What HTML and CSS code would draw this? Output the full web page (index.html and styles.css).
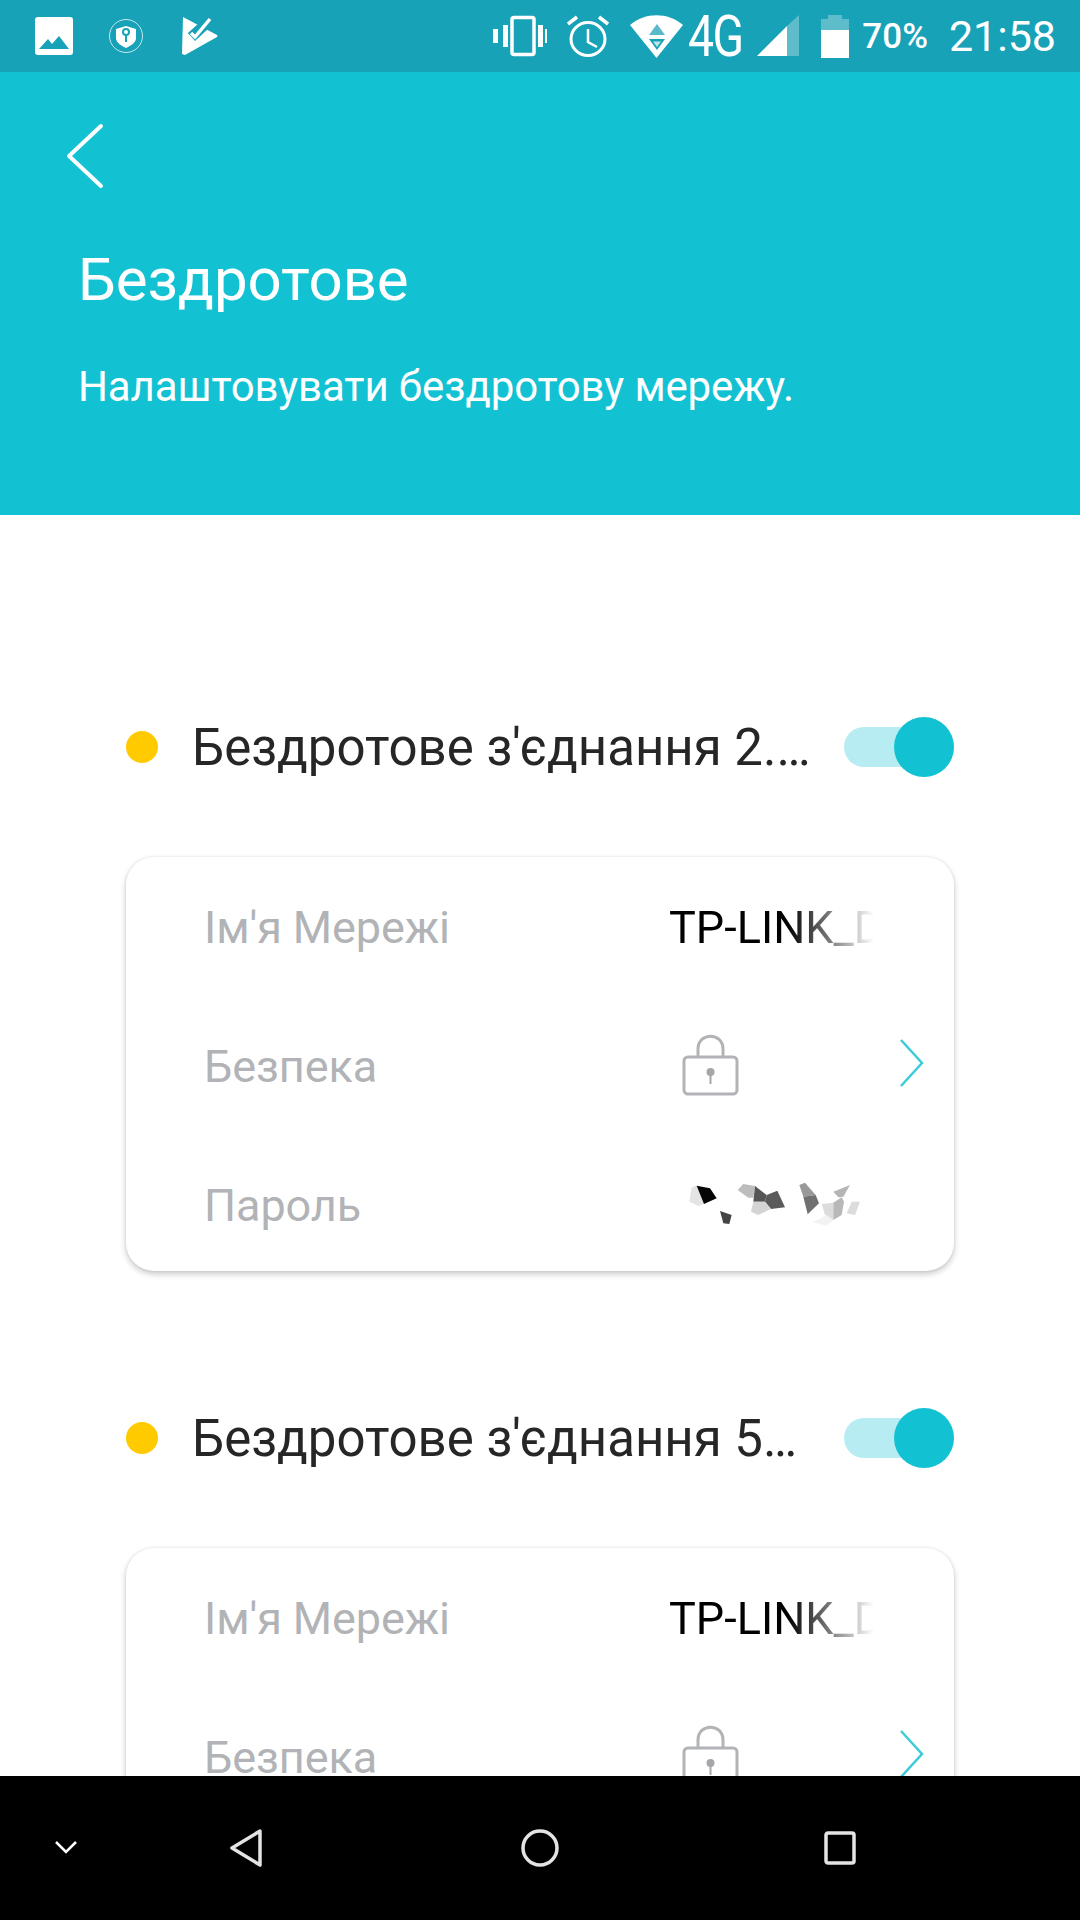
FILE: index.html
```html
<!DOCTYPE html>
<html lang="uk">
<head>
    <meta charset="UTF-8">
    <meta name="viewport" content="width=device-width, initial-scale=1.0">
    <title>Бездротове</title>
    <link rel="stylesheet" href="styles.css">
</head>
<body>
    <div class="screen">
        <div class="status-bar">
            <div class="status-left">
                <svg width="38" height="38" viewBox="0 0 38 38"><rect width="38" height="38" rx="3" fill="#fff"/><path d="M4 32 L13 22 L17 27 L24 19 L34 32 Z" fill="#17a2b8"/></svg>
                <svg class="shield" width="34" height="34" viewBox="0 0 34 34"><circle cx="17" cy="17" r="16.500" fill="none" stroke="#c5e6ec" stroke-width="1"/><path d="M17 7 L27 10 V19 C27 24 21 27 17 29 C13 27 7 24 7 19 V10 Z" fill="#fff"/><circle cx="17" cy="13" r="3" fill="none" stroke="#17a2b8" stroke-width="2"/><path d="M17 16 V23" stroke="#17a2b8" stroke-width="2"/></svg>
                <svg class="tasks" width="36" height="38" viewBox="0 0 36 38"><path d="M1 0 L35 18 Q36 19 35 20 L3 38 L0 37 Z" fill="#fff"/><path d="M6 16 L13 23 L30 4 L36 -2 L30 -6 L17 6 Z" fill="#17a2b8"/><path d="M6 16 L13 24 L26 12 L22 6 Z" fill="#17a2b8"/><path d="M9 16 L13 20 L28 2" fill="none" stroke="#fff" stroke-width="3.500"/></svg>
            </div>
            <div class="status-right">
                <svg width="54" height="42" viewBox="0 0 54 42"><rect x="0" y="14" width="5" height="14" fill="#fff"/><rect x="10" y="10" width="5" height="22" fill="#fff"/><rect x="19" y="2.500" width="22" height="37" rx="2" fill="none" stroke="#fff" stroke-width="3.500"/><rect x="45" y="10" width="5" height="22" fill="#fff"/><rect x="52" y="14" width="2" height="14" fill="#fff"/></svg>
                <svg class="alarm" width="42" height="42" viewBox="0 0 42 42"><ellipse cx="21" cy="24" rx="17" ry="16.500" fill="none" stroke="#fff" stroke-width="3"/><path d="M21 14 V27 L30 32" fill="none" stroke="#fff" stroke-width="2.500"/><path d="M1 9 L10 2 M41 9 L32 2" stroke="#fff" stroke-width="3.500"/></svg>
                <svg class="wifi" width="53" height="43" viewBox="0 0 53 43"><path d="M0 10 C15 -3 38 -3 53 10 L26.500 43 Z" fill="#fff"/><path d="M27 9 L35 20 H19 Z" fill="#5cb9c9"/><path d="M19 24 H35 L27 35 Z" fill="#17a2b8"/><path d="M23 26.500 H31 L27 32 Z" fill="#bfe3e9"/></svg>
                <span class="net">4G</span>
                <svg class="signal" width="42" height="42" viewBox="0 0 42 42"><path d="M0 41 L30 11 V41 Z" fill="#fff"/><path d="M30 11 L42 0 V41 H30 Z" fill="#5fbccb"/></svg>
                <div class="battery"><div class="battery-cap"></div><div class="battery-body"></div></div>
                <span class="percent">70%</span>
                <span class="clock">21:58</span>
            </div>
        </div>

        <div class="header">
            <svg class="back" width="38" height="68" viewBox="0 0 38 68"><path d="M35 3 L3 33 L35 63" fill="none" stroke="#fff" stroke-width="4" stroke-linecap="round" stroke-linejoin="round"/></svg>
            <h1>Бездротове</h1>
            <p>Налаштовувати бездротову мережу.</p>
        </div>

        <div class="content">
            <div class="band">
                <div class="band-head">
                    <span class="dot"></span>
                    <span class="band-name">Бездротове з'єднання 2.…</span>
                    <span class="toggle"><span class="knob"></span></span>
                </div>
                <div class="card">
                    <div class="row">
                        <span class="label">Ім'я Мережі</span>
                        <span class="value">TP-LINK_D</span>
                    </div>
                    <div class="row">
                        <span class="label">Безпека</span>
                        <svg class="lock" width="57" height="62" viewBox="0 0 57 62"><path d="M16 22 V15 C16 -2 41 -2 41 15 V22" fill="none" stroke="#b1b3b6" stroke-width="3"/><rect x="2" y="23" width="53" height="37" rx="4" fill="none" stroke="#b1b3b6" stroke-width="3"/><circle cx="28.500" cy="38" r="4" fill="#a4a6a9"/><path d="M28.500 40 V50" stroke="#a4a6a9" stroke-width="2"/></svg>
                        <svg class="chevron" width="24" height="50" viewBox="0 0 24 50"><path d="M1 2 L22 25 L1 48" fill="none" stroke="#3ccbd9" stroke-width="2.500"/></svg>
                    </div>
                    <div class="row">
                        <span class="label">Пароль</span>
                        <svg class="blurred" width="210" height="70" viewBox="0 0 630 210">
                            <path d="M65 82 L80 77 L102 132 L85 138 L58 125 Z" fill="#e4e4e4"/>
                            <path d="M80 77 L120 85 L140 115 L102 132 Z" fill="#050505"/>
                            <path d="M150 153 L185 165 L178 192 L160 190 Z" fill="#444"/>
                            <path d="M203 90 L220 72 L255 78 L250 113 L235 113 Z" fill="#bcbcbc"/>
                            <path d="M255 78 L290 105 L285 125 L250 125 Z" fill="#555"/>
                            <path d="M290 105 L322 92 L345 142 L303 147 L285 125 Z" fill="#5a5a5a"/>
                            <path d="M250 125 L285 125 L303 147 L265 165 L243 155 Z" fill="#d4d4d4"/>
                            <path d="M388 75 L405 68 L437 105 L400 110 Z" fill="#999"/>
                            <path d="M400 110 L437 105 L447 130 L413 163 Z" fill="#707070"/>
                            <path d="M490 95 L540 75 L520 110 L505 112 Z" fill="#b5b5b5"/>
                            <path d="M455 132 L490 128 L490 180 L465 165 Z" fill="#dcdcdc"/>
                            <path d="M490 128 L515 112 L522 125 L515 165 L490 180 Z" fill="#b8b8b8"/>
                            <path d="M545 125 L570 125 L555 165 L530 160 Z" fill="#dcdcdc"/>
                            <path d="M430 187 L470 165 L490 180 L470 197 Z" fill="#f2f2f2"/>
                        </svg>
                    </div>
                </div>
            </div>

            <div class="band">
                <div class="band-head">
                    <span class="dot"></span>
                    <span class="band-name">Бездротове з'єднання 5…</span>
                    <span class="toggle"><span class="knob"></span></span>
                </div>
                <div class="card">
                    <div class="row">
                        <span class="label">Ім'я Мережі</span>
                        <span class="value">TP-LINK_D</span>
                    </div>
                    <div class="row">
                        <span class="label">Безпека</span>
                        <svg class="lock" width="57" height="62" viewBox="0 0 57 62"><path d="M16 22 V15 C16 -2 41 -2 41 15 V22" fill="none" stroke="#b1b3b6" stroke-width="3"/><rect x="2" y="23" width="53" height="37" rx="4" fill="none" stroke="#b1b3b6" stroke-width="3"/><circle cx="28.500" cy="38" r="4" fill="#a4a6a9"/><path d="M28.500 40 V50" stroke="#a4a6a9" stroke-width="2"/></svg>
                        <svg class="chevron" width="24" height="50" viewBox="0 0 24 50"><path d="M1 2 L22 25 L1 48" fill="none" stroke="#3ccbd9" stroke-width="2.500"/></svg>
                    </div>
                </div>
            </div>
        </div>

        <div class="nav-bar">
            <svg class="nav-hide" width="24" height="14" viewBox="0 0 24 14"><path d="M2 2 L12 12 L22 2" fill="none" stroke="#fff" stroke-width="2.500"/></svg>
            <svg class="nav-back" width="34" height="38" viewBox="0 0 34 38"><path d="M31 2 L3 19 L31 36 Z" fill="none" stroke="#e4e4e4" stroke-width="3.500" stroke-linejoin="round"/></svg>
            <svg class="nav-home" width="38" height="38" viewBox="0 0 38 38"><circle cx="19" cy="19" r="17" fill="none" stroke="#e4e4e4" stroke-width="3.500"/></svg>
            <svg class="nav-recent" width="32" height="34" viewBox="0 0 32 34"><rect x="2" y="2" width="28" height="30" rx="2" fill="none" stroke="#e4e4e4" stroke-width="3.500"/></svg>
        </div>
    </div>
</body>
</html>
```

FILE: styles.css
```css
html, body {
    margin: 0;
    padding: 0;
}
body {
    font-family: Roboto, "Noto Sans", sans-serif;
    background: #fff;
}
.screen {
    width: 1080px;
    height: 1920px;
    display: flex;
    flex-direction: column;
    overflow: hidden;
}

/* status bar */
.status-bar {
    height: 72px;
    flex: none;
    background: #17a2b8;
    color: #fff;
    display: flex;
    align-items: center;
    justify-content: space-between;
    padding: 0 24px 0 35px;
    box-sizing: border-box;
}
.status-left {
    display: flex;
    align-items: center;
    gap: 36px;
}
.status-left .tasks { margin-left: 3px; }
.status-right {
    display: flex;
    align-items: center;
}
.status-right .alarm { margin-left: 20px; }
.status-right .wifi { margin-left: 21px; }
/* the 4G glyphs are narrower than Roboto */
.net {
    display: inline-block;
    width: 57px;
    font-size: 58px;
    font-weight: 400;
    line-height: 72px;
    letter-spacing: -2px;
    white-space: nowrap;
    transform: scaleX(0.8);
    transform-origin: left center;
    margin-left: 5px;
}
.signal { margin-left: 12px; }
.battery {
    margin-left: 22px;
    width: 28px;
    display: flex;
    flex-direction: column;
    align-items: center;
}
.battery-cap {
    width: 14px;
    height: 4px;
    background: #5fbccb;
}
.battery-body {
    width: 28px;
    height: 39px;
    background: linear-gradient(#5fbccb 0 11px, #fff 11px);
}
.percent {
    font-size: 35px;
    font-weight: 500;
    margin-left: 13px;
}
.clock {
    font-size: 43px;
    margin-left: 21px;
}

/* teal header */
.header {
    height: 443px;
    flex: none;
    background: #12c2d3;
    color: #fff;
    padding: 51px 0 0 78px;
    box-sizing: border-box;
}
.back {
    display: block;
    margin-left: -12px;
}
.header h1 {
    margin: 57px 0 0;
    font-size: 60px;
    font-weight: 400;
    line-height: 64px;
    letter-spacing: -0.1px;
}
.header p {
    margin: 52px 0 0;
    font-size: 42px;
    line-height: 46px;
    letter-spacing: -0.1px;
}

/* wireless bands */
.content {
    flex: 1;
    min-height: 0;
    overflow: hidden;
    padding: 0 126px;
}
.band { padding-top: 202px; }
.band + .band { padding-top: 137px; }
.band-head {
    display: flex;
    align-items: center;
    height: 60px;
}
.dot {
    width: 32px;
    height: 32px;
    border-radius: 50%;
    background: #ffcb00;
    flex: none;
}
.band-name {
    margin-left: 34px;
    flex: 1;
    font-size: 51px;
    color: #262626;
    white-space: nowrap;
}
.toggle {
    width: 110px;
    height: 40px;
    flex: none;
    position: relative;
    border-radius: 20px;
    background: #b7edf2;
}
.knob {
    position: absolute;
    right: 0;
    top: -10px;
    width: 60px;
    height: 60px;
    border-radius: 50%;
    background: #12c2d3;
}
.card {
    margin-top: 80px;
    height: 414px;
    box-sizing: border-box;
    border-radius: 28px;
    background: #fff;
    box-shadow: 0 3px 6px rgba(0,0,0,0.22), 0 0 3px rgba(0,0,0,0.08);
    padding: 1px 0 0 78px;
    display: flex;
    flex-direction: column;
}
.row {
    height: 139px;
    flex: none;
    display: flex;
    align-items: center;
    position: relative;
}
.label {
    font-size: 45px;
    letter-spacing: -0.1px;
    color: #b1b3b6;
    width: 465px;
    flex: none;
}
.value {
    font-size: 45px;
    color: #000;
    width: 205px;
    overflow: hidden;
    white-space: nowrap;
    -webkit-mask-image: linear-gradient(90deg, #000 58%, transparent 100%);
    mask-image: linear-gradient(90deg, #000 58%, transparent 100%);
}
.lock {
    margin: 0 0 4px 13px;
}
.chevron {
    position: absolute;
    right: 30px;
    top: 41px;
}
.blurred {
    margin: 0 0 22px 1px;
}

/* android nav bar */
.nav-bar {
    height: 144px;
    flex: none;
    background: #000;
    position: relative;
}
.nav-bar svg { position: absolute; }
.nav-hide { left: 54px; top: 64px; }
.nav-back { left: 229px; top: 53px; }
.nav-home { left: 521px; top: 53px; }
.nav-recent { left: 824px; top: 55px; }
```
